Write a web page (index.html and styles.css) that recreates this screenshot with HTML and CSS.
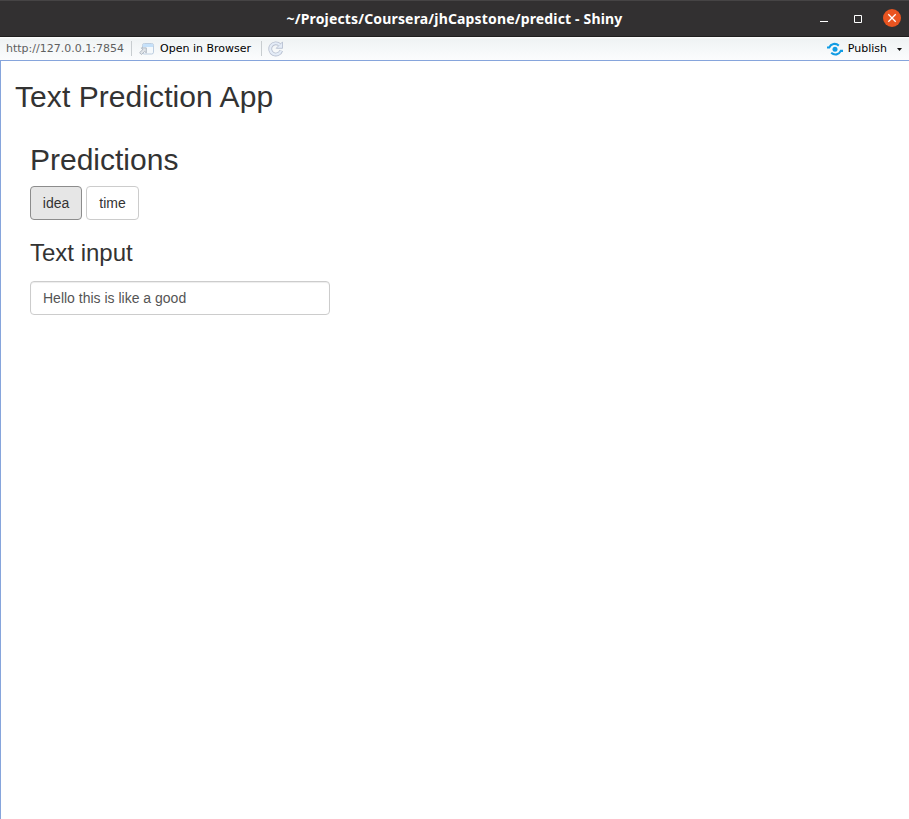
FILE: index.html
```html
<!DOCTYPE html>
<html lang="en">
<head>
<meta charset="utf-8">
<title>~/Projects/Coursera/jhCapstone/predict - Shiny</title>
<link rel="stylesheet" href="styles.css">
</head>
<body>
<header class="titlebar">
  <span class="title">~/Projects/Coursera/jhCapstone/predict - Shiny</span>
  <div class="controls">
    <svg width="8" height="18" viewBox="0 0 8 18"><path d="M0 11.5h8" stroke="#fff"/></svg>
    <svg width="8" height="18" viewBox="0 0 8 18"><path d="M.5 5.5h7v7h-7z" fill="none" stroke="#fff"/></svg>
    <svg width="19" height="19" viewBox="0 0 19 19"><circle cx="10" cy="9" r="9" fill="#e95420"/><path d="M6.3 5.3l7.4 7.4M13.7 5.3l-7.4 7.4" stroke="#fff" stroke-width="1.3"/></svg>
  </div>
</header>
<nav class="toolbar">
  <span class="url">http://127.0.0.1:7854</span>
  <i class="sep"></i>
  <svg class="open-icon" width="16" height="14" viewBox="0 0 16 14"><rect x="3.5" y="1.5" width="11" height="10.5" rx="1.8" fill="#f5f9fc" stroke="#bccde0"/><path d="M4 5V3q0-1 1-1h8q1 0 1 1v2z" fill="#c5e1fa"/><path d="M2.3 5.9h5v5L5.7 9.4 2.5 12.6.6 10.7l3.2-3.2z" fill="#e1e5e9" stroke="#a9b2bd" stroke-width=".9"/></svg>
  <span class="label open-label">Open in Browser</span>
  <i class="sep"></i>
  <svg class="reload" width="16" height="16" viewBox="0 0 16 16"><path d="M11.8 4A5.6 5.6 0 1 0 13.2 9.6" fill="none" stroke="#b9c1d1" stroke-width="3.8"/><path d="M14.5.9v6.4H8.2l2.2-2.2z" fill="#e4ecf7" stroke="#b9c1d1" stroke-width=".9"/><path d="M11.8 4A5.6 5.6 0 1 0 13 9.8" fill="none" stroke="#e4ecf7" stroke-width="2.2"/></svg>
  <div class="publish">
    <svg width="16" height="14" viewBox="0 0 16 14"><circle cx="8" cy="7.2" r="2.5" fill="#119ce4"/><path d="M0 5.5h2.2C4 1.7 8.5.7 11.8 3.6M16 8.9h-2.2C12 12.7 7.5 13.7 4.2 10.8" fill="none" stroke="#119ce4" stroke-width="2.1"/></svg>
    <span class="label publish-label">Publish</span>
    <svg class="caret" width="5" height="3" viewBox="0 0 5 3"><path d="M0 0h5L2.5 3z" fill="#111"/></svg>
  </div>
</nav>
<main class="page">
  <h2 class="app-title">Text Prediction App</h2>
  <section class="panel">
    <h2>Predictions</h2>
    <div class="buttons">
      <button class="btn active">idea</button>
      <button class="btn time">time</button>
    </div>
    <h3>Text input</h3>
    <input type="text" value="Hello this is like a good" aria-label="Text input">
  </section>
</main>
</body>
</html>
```
FILE: styles.css
```css
* { box-sizing: border-box; }
body {
  margin: 0;
  height: 819px;
  display: flex;
  flex-direction: column;
  overflow: hidden;
  background: #fff;
  color: #333;
  font: 14px/20px "Liberation Sans", Arial, sans-serif;
}
svg { display: block; flex: none; }
.titlebar {
  height: 37px;
  flex: none;
  display: grid;
  grid-template-columns: 1fr auto 1fr;
  align-items: center;
  background: #323031;
  border-top: 1px solid #464445;
  border-bottom: 1px solid #1f1e1e;
}
.title {
  grid-column: 2;
  color: #fff;
  font: bold 14px/20px "Noto Sans", "Open Sans", sans-serif;
  letter-spacing: .16px;
  white-space: nowrap;
}
.controls {
  display: flex;
  align-items: center;
  justify-content: flex-end;
  padding-right: 8px;
}
.controls svg + svg { margin-left: 26px; }
.controls svg:last-child { margin-left: 20px; }
.toolbar {
  height: 24px;
  flex: none;
  display: flex;
  align-items: center;
  padding: 0 7px 0 6px;
  background: linear-gradient(#fff 0, #eff3f4 2px, #fbfcfd 22px);
  border-bottom: 1px solid #86a5dc;
  font: 11px/14px "DejaVu Sans", sans-serif;
  color: #000;
  white-space: nowrap;
}
.url { width: 125px; color: #606060; }
.sep { width: 1px; height: 15px; background: #c8cdd0; }
.open-icon { margin-left: 7px; }
.open-label { margin-left: 5px; width: 101px; }
.reload { margin-left: 6px; }
.publish { margin-left: auto; display: flex; align-items: center; }
.publish-label { margin: 0 10px 0 5px; }
.caret { margin-top: 2px; }
.page {
  flex: 1;
  padding: 19px 15px 0 14px;
  border-left: 1px solid #86a5dc;
}
h2, h3 { font-weight: 500; line-height: 1.1; margin: 0; }
h2 { font-size: 30px; }
h3 { font-size: 24px; margin-top: 20px; }
.app-title { letter-spacing: .07px; }
.panel { padding: 30px 15px 0; }
.buttons { display: flex; gap: 4px; margin-top: 10px; }
.btn {
  height: 34px;
  width: 52px;
  padding: 0;
  border: 1px solid #ccc;
  border-radius: 4px;
  background: #fff;
  color: #333;
  font: 14px/20px "Liberation Sans", Arial, sans-serif;
}
.time { width: 53px; }
.active { background: #e6e6e6; border-color: #8c8c8c; }
input {
  display: block;
  width: 300px;
  height: 34px;
  margin-top: 15px;
  padding: 6px 12px;
  border: 1px solid #ccc;
  border-radius: 4px;
  background: #fff;
  box-shadow: inset 0 1px 1px rgba(0, 0, 0, .075);
  color: #555;
  font: 14px/20px "Liberation Sans", Arial, sans-serif;
}
```
